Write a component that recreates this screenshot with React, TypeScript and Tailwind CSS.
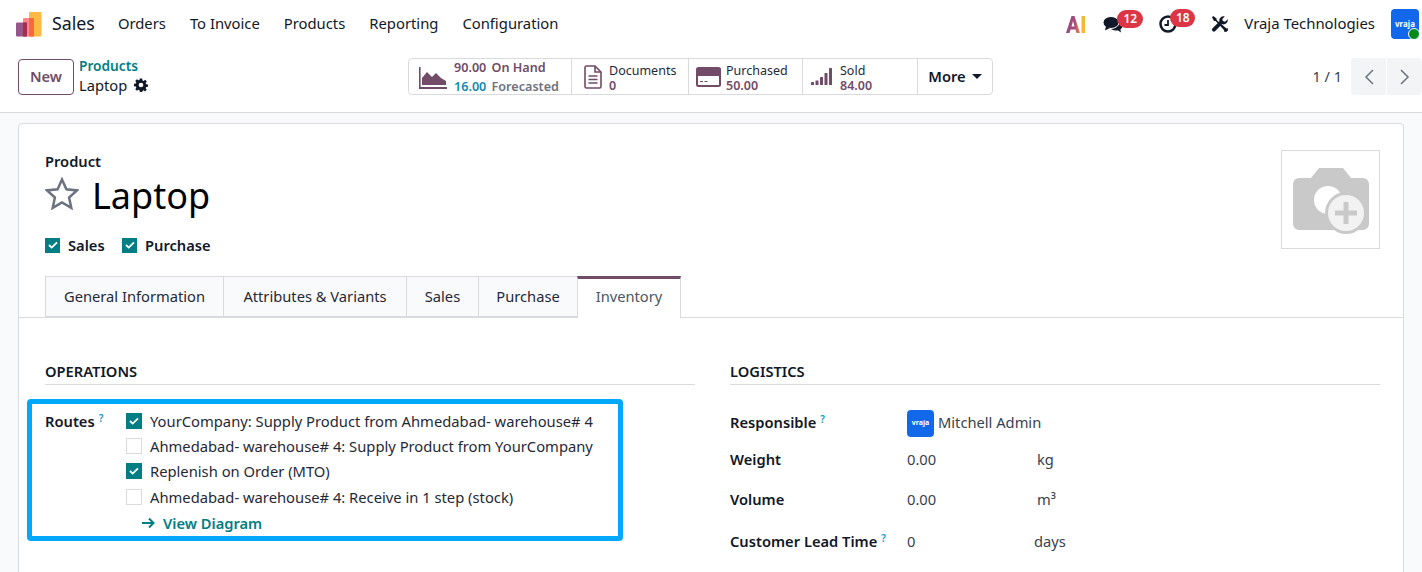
import React from 'react'

const font = { fontFamily: '"Noto Sans", sans-serif' }

const Logo = () => (
  <svg width="26" height="25" viewBox="0 0 26 25">
    <rect x="13" y="0" width="12.5" height="24.5" rx="1" fill="#FBB945" />
    <rect x="7" y="6" width="11" height="18.5" rx="1" fill="#FC868B" />
    <rect x="13" y="6" width="5" height="18.5" fill="#F76B3A" />
    <rect x="0" y="10.5" width="11" height="14" rx="1" fill="#96588A" />
    <rect x="7" y="10.5" width="4" height="14" fill="#A3304F" />
  </svg>
)

const Check = ({ on, size = 'h-4 w-4' }: { on?: boolean; size?: string }) => (
  <span className={`flex shrink-0 items-center justify-center ${size} ${on ? 'bg-[#017e84]' : 'border border-[#d8dadd] bg-white'}`}>
    {on && (
      <svg width="10" height="8" viewBox="0 0 10 8">
        <path d="M1 4l2.7 2.6L9 1.3" fill="none" stroke="#fff" strokeWidth="1.8" />
      </svg>
    )}
  </span>
)

const Hint = () => <sup className="ml-1 text-[10px] font-semibold text-[#0e9cc4]">?</sup>

const VrajaMark = ({ className, text }: { className: string; text: string }) => (
  <div className={`flex items-center justify-center rounded bg-[#1268ea] font-bold text-white ${className} ${text}`}>vraja</div>
)

const StatIcon = ({ kind }: { kind: string }) => {
  if (kind === 'area')
    return (
      <svg width="28" height="24" viewBox="0 0 28 24" fill="#714b67">
        <path d="M0 2h1.6v20H28v2H0z" />
        <path d="M3 20V13l5-6 5 5 4-4 5 5 5 3v4z" />
      </svg>
    )
  if (kind === 'doc')
    return (
      <svg width="18" height="24" viewBox="0 0 18 24" fill="none" stroke="#714b67" strokeWidth="1.6">
        <path d="M1 2.500A1.500 1.500 0 0 1 2.500 1H11l6 6v14.500a1.500 1.500 0 0 1-1.500 1.500h-13A1.500 1.500 0 0 1 1 21.500z" />
        <path d="M11 1v6h6M4.500 11h9M4.500 14.500h9M4.500 18h9" />
      </svg>
    )
  if (kind === 'card')
    return (
      <svg width="25" height="20" viewBox="0 0 25 20">
        <rect x="0" y="0" width="25" height="20" rx="2.500" fill="#714b67" />
        <rect x="2" y="9" width="21" height="9" fill="#fff" />
        <path d="M4 14.500h3M8.500 14.500h3" stroke="#714b67" strokeWidth="1.200" />
      </svg>
    )
  return (
    <svg width="24" height="20" viewBox="0 0 24 20" fill="#714b67">
      <rect x="0" y="15" width="3" height="3" rx=".5" />
      <rect x="4.500" y="13.500" width="3" height="4.500" rx=".5" />
      <rect x="9" y="10" width="3" height="8" rx=".5" />
      <rect x="13.500" y="6" width="3" height="12" rx=".5" />
      <rect x="18" y="1" width="3" height="17" rx=".5" />
    </svg>
  )
}

const StatButton = ({ className, kind, top, bottom }: { className: string; kind: string; top: string; bottom: string }) => (
  <div className={`flex h-full items-center border-r border-[#d8dadd] ${className}`}>
    <StatIcon kind={kind} />
    <div className="mt-[2px] text-[12.500px] leading-[15px]">
      <div className="text-[#1f2937]">{top}</div>
      <div className="font-semibold text-[#714b67]">{bottom}</div>
    </div>
  </div>
)

const tabs = [
  ['General Information', 'w-[178px]'],
  ['Attributes & Variants', 'w-[183px]'],
  ['Sales', 'w-[72px]'],
  ['Purchase', 'w-[99px]'],
]

const routes = [
  ['YourCompany: Supply Product from Ahmedabad- warehouse# 4', true],
  ['Ahmedabad- warehouse# 4: Supply Product from YourCompany', false],
  ['Replenish on Order (MTO)', true],
  ['Ahmedabad- warehouse# 4: Receive in 1 step (stock)', false],
] as const

const Row = ({ label, hint, value, unit, rowClass, valueClass = 'w-[130px]' }: { label: string; hint?: boolean; value: string; unit: string; rowClass: string; valueClass?: string }) => (
  <div className={`flex items-center ${rowClass}`}>
    <div className="w-[177px] font-semibold text-[#111827]">
      {label}
      {hint && <Hint />}
    </div>
    <div className={`text-[#374151] ${valueClass}`}>{value}</div>
    <div className="text-[#374151]">{unit}</div>
  </div>
)

export default function App() {
  return (
    <div style={font} className="relative h-[572px] w-[1422px] overflow-hidden bg-white text-[14.700px] text-[#111827]">
      <header className="flex h-12 items-center pl-4 pr-[3px]">
        <Logo />
        <span className="ml-[10px] pb-[2px] text-[17.800px]">Sales</span>
        <nav className="ml-[11px] flex pb-[2px] text-[14.800px]">
          <span className="px-3">Orders</span>
          <span className="px-3">To Invoice</span>
          <span className="px-3">Products</span>
          <span className="px-3">Reporting</span>
          <span className="px-3">Configuration</span>
        </nav>
        <div className="ml-auto flex items-center">
          <svg width="20" height="18" viewBox="0 0 20 18">
            <defs>
              <linearGradient id="aiA" x1="0" x2="1" y1="0" y2="0">
                <stop offset="0" stopColor="#8f4d86" />
                <stop offset="0.6" stopColor="#a84a78" />
                <stop offset="1" stopColor="#ee8a3c" />
              </linearGradient>
            </defs>
            <path d="M0 18L5.500 1h3L14 18h-3.500l-1-3.500H4.500L3.500 18zM5.500 11.500h3L7 6z" fill="url(#aiA)" fillRule="evenodd" />
            <path d="M15.500 1H19v17h-3.500z" fill="#f7b733" />
          </svg>
          <div className="relative ml-[17px] w-[56px]">
            <svg width="20" height="17" viewBox="0 0 20 17" fill="#111827">
              <ellipse cx="13" cy="10" rx="6.500" ry="4.500" />
              <path d="M13 13l5 3.500-1-5z" />
              <ellipse cx="8" cy="6.500" rx="8" ry="6" stroke="#fff" strokeWidth="1" />
              <path d="M3 10l-1 4.500 5-2.500z" />
            </svg>
            <span className="absolute left-[14px] -top-[6px] w-[26px] rounded-full bg-[#dc3545] text-center text-[12px] font-semibold leading-[18px] text-white">12</span>
          </div>
          <div className="relative w-[53px]">
            <svg width="18" height="18" viewBox="0 0 18 18" fill="none" stroke="#111827">
              <circle cx="9" cy="9" r="7.500" strokeWidth="2.500" />
              <path d="M9 5v5H5.500" strokeWidth="1.800" />
            </svg>
            <span className="absolute left-[11px] -top-[6px] w-[25px] rounded-full bg-[#dc3545] text-center text-[12px] font-semibold leading-[18px] text-white">18</span>
          </div>
          <svg width="16" height="16" viewBox="0 0 16 16" fill="#111827">
            <path d="M1.200 0L4.600 2.400v1.500l9.900 8.600 1.300-.4.200 2.300-1.900 1.600-2.200-.4.300-1.300L3.600 5H2L0 1.300z" />
            <path d="M15.700 3.300l-2.600 2.400-2.200-.6-.6-2.100L12.800.5a4.200 4.200 0 0 0-5.400 5L.6 12.300a1.900 1.900 0 0 0 2.700 2.700l6.800-6.900a4.200 4.200 0 0 0 5.600-4.800z" />
          </svg>
          <span className="ml-4 pb-[2px] text-[14.900px]">Vraja Technologies</span>
          <div className="relative ml-4">
            <VrajaMark className="h-[30px] w-[28px]" text="text-[8px]" />
            <span className="absolute -bottom-[1px] -right-[1px] h-3 w-3 rounded-full border border-white bg-[#008a1e]" />
          </div>
        </div>
      </header>

      <div className="flex h-[65px] items-start border-b border-[#d8dadd] pl-[18px] pt-[11px]">
        <div className="flex h-9 w-14 items-center justify-center rounded border border-[#714b67] pb-[2px] font-semibold text-[#714b67]">New</div>
        <div className="ml-[5px] -mt-[3px] flex w-[329px] flex-col leading-5">
          <span className="text-[13.700px] font-semibold text-[#017e84]">Products</span>
          <span className="-mt-px flex items-center gap-[7px]">
            Laptop
            <svg width="14" height="14" viewBox="0 0 24 24" fill="#111827">
              <path fillRule="evenodd" d="M10 1h4l.6 3.200 2 .8L19.300 3 22 5.800l-2 2.700.9 2 3.100.5v4l-3.100.6-.9 2 1.800 2.600L19 23l-2.500-1.800-2 .9L14 24h-4l-.5-2.900-2-.9L5 22l-2.800-2.800L4 16.600l-.9-2L0 14v-4l3.100-.5.9-2L2.200 5 5 2.200l2.600 1.800 1.900-.8zM12 8a4 4 0 1 0 0 8 4 4 0 0 0 0-8z" />
            </svg>
          </span>
        </div>
        <div className="-mt-[1px] flex h-[37px] w-[585px] items-center rounded border border-[#d8dadd]">
          <div className="flex h-full w-[163px] items-center gap-[7px] border-r border-[#d8dadd] pl-[10px] text-[12.600px] font-semibold leading-[19px]">
            <StatIcon kind="area" />
            <div>
              <div className="text-[#714b67]">90.00 <span className="ml-[2px]">On Hand</span></div>
              <div><span className="text-[#0e8bb0]">16.00</span> <span className="ml-[2px] text-[#6b7280]">Forecasted</span></div>
            </div>
          </div>
          <StatButton className="w-[117px] gap-[7px] pl-3" kind="doc" top="Documents" bottom="0" />
          <StatButton className="w-[114px] gap-[5px] pl-[7px]" kind="card" top="Purchased" bottom="50.00" />
          <StatButton className="w-[115px] gap-[5px] pl-2" kind="bars" top="Sold" bottom="84.00" />
          <div className="flex flex-1 items-center justify-center gap-[6px] font-semibold text-[#111827]">
            More
            <span className="h-0 w-0 border-x-[5px] border-t-[5px] border-x-transparent border-t-[#111827]" />
          </div>
        </div>
        <div className="-mt-[1px] ml-auto flex h-[37px] items-center">
          <span className="mr-[9px] text-[14.500px] text-[#374151]">1 / 1</span>
          <div className="flex h-full w-[35px] items-center justify-center rounded-l bg-[#f3f4f6]">
            <svg width="10" height="16" viewBox="0 0 10 16" fill="none" stroke="#6b7280" strokeWidth="1.500"><path d="M9 1L2 8l7 7" /></svg>
          </div>
          <div className="ml-px flex h-full w-[35px] items-center justify-center rounded-r bg-[#f3f4f6]">
            <svg width="10" height="16" viewBox="0 0 10 16" fill="none" stroke="#6b7280" strokeWidth="1.500"><path d="M1 1l7 7-7 7" /></svg>
          </div>
        </div>
      </div>

      <div className="h-[459px] bg-[#f9fafb] pl-[18px] pt-[10px]">
        <main className="h-[500px] w-[1386px] rounded-t border border-[#d8dadd] bg-white pt-[26px]">
          <div className="flex justify-between pl-[26px] pr-[23px]">
            <div>
              <div className="-mt-px font-semibold leading-[24px] text-[#111827]">Product</div>
              <div className="-mt-px flex items-center gap-[14px]">
                <svg className="-mt-[6px]" width="34" height="33" viewBox="0 0 34 33" fill="none" stroke="#6b7280" strokeWidth="2.500">
                  <path d="M17 2.500l4.400 9.800 10.600 1.100-7.900 7.100 2.200 10.400L17 25.500 7.700 30.900 9.900 20.500 2 13.400l10.600-1.100z" />
                </svg>
                <span className="-ml-px text-[36px] leading-[48px] text-black">Laptop</span>
              </div>
              <div className="mt-[14px] flex items-center font-semibold">
                <Check on size="h-[15px] w-[15px]" />
                <span className="ml-2 w-[54px]">Sales</span>
                <Check on size="h-[15px] w-[15px]" />
                <span className="ml-2">Purchase</span>
              </div>
            </div>
            <div className="flex h-[99px] w-[99px] items-center justify-center border border-[#d8dadd]">
              <svg width="78" height="68" viewBox="7 8 78 68">
                <path d="M14 20h12l8-10h24l8 10h12a6 6 0 0 1 6 6v40a6 6 0 0 1-6 6H14a6 6 0 0 1-6-6V26a6 6 0 0 1 6-6z" fill="#c9c9c9" />
                <circle cx="43" cy="42" r="14" fill="#fff" />
                <circle cx="61" cy="55" r="21" fill="#c9c9c9" />
                <circle cx="61" cy="55" r="18" fill="#f2f2f2" />
                <path d="M61 44v22M50 55h22" stroke="#c9c9c9" strokeWidth="5" />
              </svg>
            </div>
          </div>

          <div className="mt-5 flex h-[42px] items-stretch border-b border-[#d8dadd] pl-[26px]">
            {tabs.map(([name, w]) => (
              <div key={name} className={`flex h-[41px] items-center justify-center border-y border-l border-[#d8dadd] bg-[#f9fafb] pb-[2px] text-[#1f2937] ${w}`}>{name}</div>
            ))}
            <div className="z-10 flex h-[42px] w-[104px] items-center justify-center border-x border-[#d8dadd] border-t-[3px] border-t-[#714b67] bg-white pb-[5px] text-[#4b5563]">Inventory</div>
          </div>

          <div className="mt-[44px] flex gap-[35px] pl-[26px]">
            <section className="w-[650px]">
              <h3 className="border-b border-[#d8dadd] pb-1 font-semibold leading-[18px]">OPERATIONS</h3>
              <div className="mt-[23px] flex">
                <div className="mt-px w-[81px] font-semibold leading-[25px]">Routes<Hint /></div>
                <div>
                  {routes.map(([label, on]) => (
                    <div key={label} className="flex h-[25.300px] items-center gap-2">
                      <Check on={on} />
                      <span className="text-[14.750px] text-[#1f2937]">{label}</span>
                    </div>
                  ))}
                  <div className="ml-4 mt-[1px] flex h-[25px] items-center gap-2 font-semibold text-[#017e84]">
                    <svg width="13" height="12" viewBox="0 0 13 12" fill="none" stroke="#017e84" strokeWidth="2"><path d="M0 6h11M7 1.500L11.500 6 7 10.500" /></svg>
                    View Diagram
                  </div>
                </div>
              </div>
            </section>
            <section className="w-[650px]">
              <h3 className="border-b border-[#d8dadd] pb-1 font-semibold leading-[18px]">LOGISTICS</h3>
              <div className="mt-[25px]">
                <div className="flex h-[27px] items-center">
                  <div className="-mt-[3px] w-[177px] font-semibold">Responsible<Hint /></div>
                  <VrajaMark className="h-[27px] w-[27px]" text="text-[7px]" />
                  <span className="-mt-[3px] ml-1 text-[#374151]">Mitchell Admin</span>
                </div>
                <Row label="Weight" value="0.00" unit="kg" rowClass="mt-[9px] h-[26px]" />
                <Row label="Volume" value="0.00" unit="m³" rowClass="mt-[14px] h-[26px]" />
                <Row label="Customer Lead Time" hint value="0" unit="days" rowClass="mt-4 h-[26px]" valueClass="w-[127px]" />
              </div>
            </section>
          </div>
        </main>
      </div>

      <div className="absolute left-[27px] top-[399px] h-[142px] w-[596px] rounded border-[5px] border-[#00a8fb]" />
    </div>
  )
}
